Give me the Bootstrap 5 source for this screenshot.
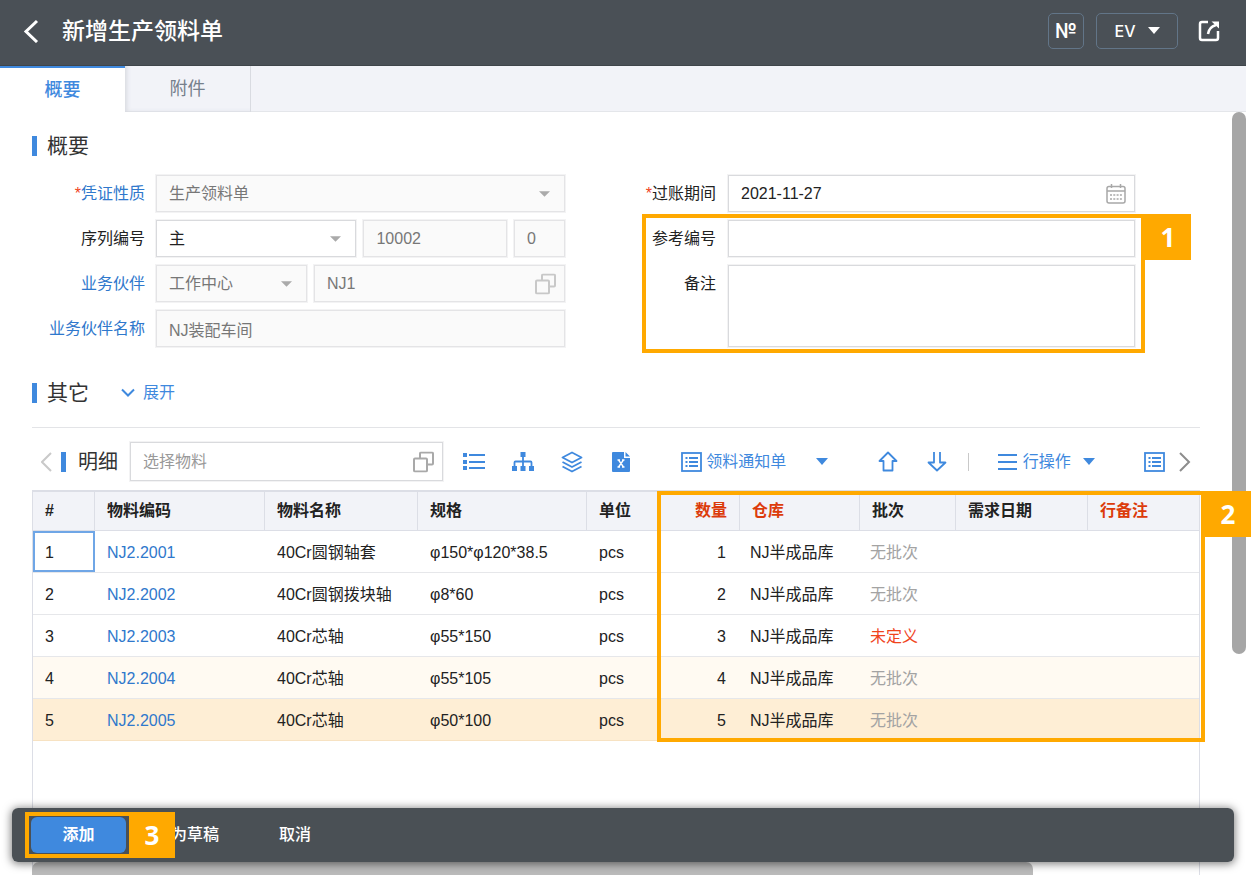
<!DOCTYPE html>
<html lang="zh-CN">
<head>
<meta charset="utf-8">
<meta name="viewport" content="width=device-width, initial-scale=1">
<title>新增生产领料单</title>
<link rel="stylesheet" href="https://cdn.jsdelivr.net/npm/bootstrap@5.3.0/dist/css/bootstrap.min.css">
<style>
:root{--blue:#3f89de;--link:#2f78cc;--bar:#4a5056;--line:#d9dadd;--grid:#dcdee6;--mark:#ffa900;--soft:#fafafa}
body{font-family:"Liberation Sans","Noto Sans CJK SC",sans-serif;font-size:16px;line-height:24px;color:#222;background:#fff}
.app{padding-right:5px}
svg{display:block;flex:none}
.icon-btn{background:none;border:0;padding:0;color:var(--blue)}
/* header */
.topbar{height:66px;padding:0 26px 4px 22px;background:var(--bar);border-bottom:1px solid #3f454a;color:#fff}
.topbar h1{font-size:23px;line-height:30px;font-weight:500;margin:0 0 0 22px}
.topbar .icon-btn{color:#fff}
.box-btn{height:36px;border:1px solid #627588;border-radius:5px;background:none;color:#fff;font-weight:700;padding:0}
.box-no{width:36px;margin-right:12px;font-family:Inter,sans-serif;font-weight:600;font-size:20px;line-height:28px}
.box-ev{width:82px;margin-right:20px;font-family:Inter,sans-serif;font-weight:500}
/* tabs */
.tabstrip{height:46px;background:#f2f3f8;border-bottom:1px solid #e4e6ea}
.tabstrip a{width:126px;height:46px;line-height:46px;font-size:18px;text-align:center;text-decoration:none;color:#76808c;border-right:1px solid #d9dbe1;box-shadow:inset 4px -2px 4px -2px #d9dbe1}
.tabstrip a.current{width:125px;color:var(--blue);background:#fff;font-weight:500;line-height:44px;border-top:2px solid var(--blue);border-right:0;box-shadow:none}
/* sections */
.content-col{min-width:0;padding:19px 32px 0}
.sect{font-size:21px;line-height:30px;font-weight:400;margin:0;color:#333;display:flex;align-items:center}
.sect::before{content:"";width:5px;height:20px;background:var(--blue);margin-right:10px}
.tools .sect{font-size:20px}
.tools .sect::before{margin-right:12px}
/* form */
.form-cols{display:grid;grid-template-columns:minmax(0,533fr) minmax(0,489fr);column-gap:81px;padding-right:65px;margin-top:14px}
.stack{display:flex;flex-direction:column;gap:8px}
.frow{display:flex}
.frow>label{width:113px;margin-right:11px;text-align:right;line-height:37px;flex:none;white-space:nowrap}
.right-col .frow>label{width:70px;margin-right:12px}
.req::before{content:"*";color:#f0441c}
.lnk{color:var(--link)}
.fields{display:flex;gap:7px;flex:1;min-width:0}
.form-control,.form-select{height:37px;border:1px solid var(--line);border-radius:0;padding:0 12px;font-size:16px;line-height:35px;color:#222;background-color:#fff;box-shadow:0 0 0 1px #f3f3f4}
.form-select{background-image:url("data:image/svg+xml,%3Csvg xmlns='http://www.w3.org/2000/svg' viewBox='0 0 10 5'%3E%3Cpath fill='%23aaaaaa' d='M0 0h10L5 5z'/%3E%3C/svg%3E");background-size:11px 6px;background-position:right 14px center}
.form-control:disabled,.form-select:disabled{background-color:var(--soft);color:#777;opacity:1;border-color:#e4e4e6}
.form-control::placeholder{color:#999}
textarea.form-control{height:82px;resize:none}
.w-serial{flex:201 1 201px}
.w-number{flex:144 1 144px;min-width:0}
.w-rev{flex:51 1 51px;min-width:0}
.w-type{flex:151 1 151px}
.w-code{flex:251 1 251px}
.with-icon{position:relative}
.with-icon svg{position:absolute;right:9px;top:50%;transform:translateY(-50%)}
/* detail */
.rule{height:1px;background:#e3e4e7;margin-top:19px}
.tools{height:39px;margin-top:14px;padding:0 9px}
.tools .form-control{height:39px}
.picker{flex:0 1 313px;margin-left:12px}
.tool-groups{flex:1;margin-left:20px}
.short-sep{width:1px;height:18px;background:#c9c9c9;margin:0 29px 0 21px}
.grid-area{margin-top:9px;border:solid var(--grid);border-width:0 1px}
.items{width:100%;table-layout:fixed;margin:0;border-collapse:separate;border-spacing:0}
.items th{height:41px;padding:0 12px;background:#f2f3f8;border:solid var(--grid);border-width:2px 1px 1px 0;font-weight:700;color:#222}
.items th:last-child{border-right:0}
.items td{height:42px;padding:2px 12px 0;border-bottom:1px solid #e6e7ea;white-space:nowrap}
.items th.hot{color:#dc3b0b}
.items td.text-end{padding-right:14px}
.items td.lot,.items td.store{padding-left:10px}
.items td.lot{color:#a3a3a3}
.items td.lot.bad{color:#f0441c}
.items a{color:var(--link);text-decoration:none}
.items tr.warm td{background:#fffaf2}
.items tr.picked td{background:#feeed5;border-color:#f7e2c2}
.items td.sel{box-shadow:inset 0 0 0 2px #6fa6e6}
/* scrollbars */
.vtrack{width:14px;flex:none}
.vtrack div{height:71%;background:#a6a6a6;border-radius:7px}
.hthumb{position:absolute;left:32px;bottom:0;width:80%;height:13px;background:#bababa;border-radius:7px 7px 0 0}
/* bottom bar */
.actions{position:absolute;left:12px;right:17px;bottom:13px;height:54px;padding-left:19px;background:rgba(70,76,82,.98);border-radius:6px;box-shadow:0 1px 9px 1px rgba(0,0,0,.5);z-index:3}
.actions .btn{height:36px;padding:0;border:0;border-radius:6px;font-size:16px;line-height:34px;color:#fff;font-weight:500}
.actions .btn-primary{width:95px;background:var(--blue);font-weight:700}
/* numbered call-outs */
.callout-box{position:absolute;border:4px solid var(--mark);pointer-events:none;z-index:2}
.callout-box b{position:absolute;left:100%;top:-4px;width:50px;height:46px;padding-left:4px;background:var(--mark);color:#fff;font:700 26px/46px "Open Sans",sans-serif;text-align:center}
.c1{left:-4px;right:-10px;top:-6px;bottom:-6px}
.c2{left:53.5%;right:-6px;top:1px;bottom:-1px}
.c3{left:-6px;right:-7px;top:-5px;bottom:-5px}
.callout-box.c3 b{width:46px;padding-left:0}
</style>
</head>
<body>
<div class="app vh-100 d-flex flex-column overflow-hidden position-relative">
  <header class="topbar d-flex align-items-center flex-shrink-0">
    <button class="icon-btn" type="button" aria-label="返回"><svg width="18" height="24" viewBox="0 0 18 24" fill="none" stroke="currentColor" stroke-width="3"><path d="M15 2 4 12.500 15 23"/></svg></button>
    <h1>新增生产领料单</h1>
    <div class="ms-auto d-flex align-items-center">
      <button class="box-btn box-no" type="button">№</button>
      <button class="box-btn box-ev d-flex align-items-center justify-content-center gap-2" type="button">EV
        <svg class="ms-1" width="12" height="7" viewBox="0 0 12 7" fill="currentColor"><path d="M0 0h12L6 7z"/></svg></button>
      <button class="icon-btn" type="button" aria-label="新窗口打开"><svg width="22" height="22" viewBox="0 0 22 22" fill="none" stroke="currentColor" stroke-width="2.500"><path d="M10 2H4a2 2 0 0 0-2 2v14a2 2 0 0 0 2 2h14a2 2 0 0 0 2-2v-7M10 14c.5-4.500 3-7.500 8-9"/><path d="M13.500 1.500H21v7z" fill="currentColor" stroke="none"/></svg></button>
    </div>
  </header>
  <nav class="tabstrip d-flex flex-shrink-0">
    <a class="current" href="#" aria-current="page">概要</a>
    <a href="#">附件</a>
  </nav>

  <main class="d-flex flex-grow-1">
    <div class="content-col flex-grow-1 d-flex flex-column">
      <h2 class="sect">概要</h2>
      <form class="form-cols">
        <div class="stack">
          <div class="frow"><label class="lnk req" for="kind">凭证性质</label>
            <div class="fields"><select class="form-select" id="kind" disabled><option>生产领料单</option></select></div></div>
          <div class="frow"><label for="serial">序列编号</label>
            <div class="fields">
              <select class="form-select w-serial" id="serial"><option>主</option></select>
              <input class="form-control w-number" value="10002" aria-label="编号" disabled>
              <input class="form-control w-rev" value="0" aria-label="版本" disabled>
            </div></div>
          <div class="frow"><label class="lnk" for="partner">业务伙伴</label>
            <div class="fields">
              <select class="form-select w-type" id="partner" disabled><option>工作中心</option></select>
              <div class="with-icon w-code"><input class="form-control" value="NJ1" aria-label="业务伙伴编码" disabled>
                <svg width="21" height="21" viewBox="0 0 21 21" fill="none" stroke="#c8c8c8" stroke-width="2"><path d="M7 7V2a1 1 0 0 1 1-1h11a1 1 0 0 1 1 1v10a1 1 0 0 1-1 1h-5"/><rect x="1" y="7" width="13" height="13" rx="1"/></svg></div>
            </div></div>
          <div class="frow"><label class="lnk" for="pname">业务伙伴名称</label>
            <div class="fields"><input class="form-control" id="pname" value="NJ装配车间" disabled></div></div>
        </div>
        <div class="stack right-col">
          <div class="frow"><label class="req d-flex justify-content-end" for="period">过账期间</label>
            <div class="fields"><div class="with-icon flex-grow-1"><input class="form-control" id="period" value="2021-11-27">
              <svg width="20" height="20" viewBox="0 0 20 20" fill="none" stroke="#a8a8a8" stroke-width="1.500"><rect x="1" y="2.500" width="18" height="16.500" rx="2"/><path d="M1 7h18M5.500 0v4M14.500 0v4"/><path d="M4 11h12M4 15h12" stroke-dasharray="2 1.300"/></svg></div></div></div>
          <div class="stack position-relative">
            <div class="frow"><label for="refno">参考编号</label>
              <div class="fields"><input class="form-control" id="refno"></div></div>
            <div class="frow"><label for="memo">备注</label>
              <div class="fields"><textarea class="form-control" id="memo"></textarea></div></div>
            <div class="callout-box c1"><b>1</b></div>
          </div>
        </div>
      </form>

      <div class="d-flex align-items-center" style="margin-top:31px">
        <h2 class="sect">其它</h2>
        <button class="icon-btn d-flex align-items-center gap-2 ms-4" type="button">
          <svg class="ms-2" width="14" height="10" viewBox="0 0 14 10" fill="none" stroke="currentColor" stroke-width="2"><path d="m1 1.500 6 6 6-6"/></svg>展开</button>
      </div>
      <div class="rule flex-shrink-0"></div>

      <div class="tools d-flex align-items-center flex-shrink-0">
        <button class="icon-btn" type="button" aria-label="向左"><svg width="20" height="20" viewBox="0 0 20 20" fill="none" stroke="#c9c9c9" stroke-width="2"><path d="M10 1 1 10l9 9"/></svg></button>
        <h2 class="sect">明细</h2>
        <div class="with-icon picker"><input class="form-control" placeholder="选择物料" aria-label="选择物料">
          <svg width="21" height="21" viewBox="0 0 21 21" fill="none" stroke="#a9a9a9" stroke-width="2"><path d="M7 7V2a1 1 0 0 1 1-1h11a1 1 0 0 1 1 1v10a1 1 0 0 1-1 1h-5"/><rect x="1" y="7" width="13" height="13" rx="1"/></svg></div>
        <div class="tool-groups d-flex align-items-center justify-content-between">
          <div class="d-flex" style="gap:27px">
            <button class="icon-btn" type="button" aria-label="列表"><svg width="22" height="22" viewBox="0 0 22 22" fill="currentColor"><path d="M0 2h4v4H0zM0 9h4v4H0zM0 15h4v4H0zM6 3h16v2H6zM6 10h16v2H6zM6 16h16v2H6z"/></svg></button>
            <button class="icon-btn" type="button" aria-label="结构"><svg width="22" height="22" viewBox="0 0 22 22" fill="currentColor"><path d="M8.500 1h5v5h-5zM0 15h5v5H0zM8.500 15h5v5h-5zM17 15h5v5h-5z"/><path d="M11 6v9M2.500 15v-3.500a1 1 0 0 1 1-1h15a1 1 0 0 1 1 1V15" fill="none" stroke="currentColor" stroke-width="1.800"/></svg></button>
            <button class="icon-btn" type="button" aria-label="层级"><svg width="22" height="22" viewBox="0 0 22 22" fill="none" stroke="currentColor" stroke-width="1.800" stroke-linejoin="round"><path d="M11 1.500 20.500 6.500 11 11.500 1.500 6.500zM1.500 11l9.500 5 9.500-5M1.500 15.500l9.500 5 9.500-5"/></svg></button>
            <button class="icon-btn" type="button" aria-label="导入表格"><svg width="22" height="22" viewBox="0 0 22 22" fill="currentColor"><path d="M3 1h11v6h6v13a1 1 0 0 1-1 1H3a1 1 0 0 1-1-1V2a1 1 0 0 1 1-1zM15.500 1 20 5.500h-4.500z"/><path d="m8.500 9 5 7M13.500 9l-5 7M7.500 9h2.500M12 9h2.500M7.500 16h2.500M12 16h2.500" stroke="#fff" stroke-width="1.300"/></svg></button>
          </div>
          <button class="icon-btn d-flex align-items-center text-nowrap" type="button">
            <svg class="me-1" width="21" height="20" viewBox="0 0 21 20" fill="none" stroke="currentColor" stroke-width="1.800"><rect x="1" y="1" width="19" height="18"/><path d="M8 6h9M8 10h9M8 14h9M4.500 6h2M4.500 10h2M4.500 14h2"/></svg>领料通知单
            <svg style="margin-left:30px" width="12" height="7" viewBox="0 0 12 7" fill="currentColor"><path d="M0 0h12L6 7z"/></svg></button>
          <div class="d-flex align-items-center">
            <button class="icon-btn" type="button" aria-label="上移"><svg width="20" height="21" viewBox="0 0 20 21" fill="none" stroke="currentColor" stroke-width="1.800" stroke-linejoin="round"><path d="m10 1.500 8.500 8.500h-4v9.500h-9V10h-4z"/></svg></button>
            <button class="icon-btn" style="margin-left:29px" type="button" aria-label="下移"><svg width="20" height="21" viewBox="0 0 20 21" fill="none" stroke="currentColor" stroke-width="1.800" stroke-linejoin="round"><path d="M7 1v10.500H1.500L10 19.500l8.500-8H13V1"/></svg></button>
            <span class="short-sep"></span>
            <button class="icon-btn d-flex align-items-center text-nowrap" type="button">
              <svg style="margin-right:6px" width="19" height="18" viewBox="0 0 19 18" fill="none" stroke="currentColor" stroke-width="2"><path d="M0 2h19M0 9h19M0 16h19"/></svg>行操作
              <svg style="margin-left:12px" width="12" height="7" viewBox="0 0 12 7" fill="currentColor"><path d="M0 0h12L6 7z"/></svg></button>
          </div>
          <div class="d-flex align-items-center" style="gap:14px">
            <button class="icon-btn" type="button" aria-label="表单设置"><svg width="21" height="20" viewBox="0 0 21 20" fill="none" stroke="currentColor" stroke-width="1.800"><rect x="1" y="1" width="19" height="18"/><path d="M8 6h9M8 10h9M8 14h9M4.500 6h2M4.500 10h2M4.500 14h2"/></svg></button>
            <button class="icon-btn" type="button" aria-label="向右"><svg width="12" height="20" viewBox="0 0 12 20" fill="none" stroke="#8d8d8d" stroke-width="2"><path d="m1 1 9 9-9 9"/></svg></button>
          </div>
        </div>
      </div>

      <div class="grid-area flex-grow-1">
        <div class="position-relative">
          <table class="items">
            <colgroup><col style="width:62px"><col style="width:170px"><col style="width:153px"><col style="width:169px"><col style="width:74px"><col style="width:79px"><col style="width:120px"><col style="width:96px"><col style="width:132px"><col style="width:111px"></colgroup>
            <thead><tr><th>#</th><th>物料编码</th><th>物料名称</th><th>规格</th><th>单位</th><th class="hot text-end">数量</th><th class="hot">仓库</th><th>批次</th><th>需求日期</th><th class="hot">行备注</th></tr></thead>
            <tbody>
              <tr><td class="sel">1</td><td><a href="#">NJ2.2001</a></td><td>40Cr圆钢轴套</td><td>φ150*φ120*38.5</td><td>pcs</td><td class="text-end">1</td><td class="store">NJ半成品库</td><td class="lot">无批次</td><td></td><td></td></tr>
              <tr><td>2</td><td><a href="#">NJ2.2002</a></td><td>40Cr圆钢拨块轴</td><td>φ8*60</td><td>pcs</td><td class="text-end">2</td><td class="store">NJ半成品库</td><td class="lot">无批次</td><td></td><td></td></tr>
              <tr><td>3</td><td><a href="#">NJ2.2003</a></td><td>40Cr芯轴</td><td>φ55*150</td><td>pcs</td><td class="text-end">3</td><td class="store">NJ半成品库</td><td class="lot bad">未定义</td><td></td><td></td></tr>
              <tr class="warm"><td>4</td><td><a href="#">NJ2.2004</a></td><td>40Cr芯轴</td><td>φ55*105</td><td>pcs</td><td class="text-end">4</td><td class="store">NJ半成品库</td><td class="lot">无批次</td><td></td><td></td></tr>
              <tr class="picked"><td>5</td><td><a href="#">NJ2.2005</a></td><td>40Cr芯轴</td><td>φ50*100</td><td>pcs</td><td class="text-end">5</td><td class="store">NJ半成品库</td><td class="lot">无批次</td><td></td><td></td></tr>
            </tbody>
          </table>
          <div class="callout-box c2"><b>2</b></div>
        </div>
      </div>
    </div>
    <div class="vtrack"><div></div></div>
  </main>

  <div class="hthumb"></div>
  <footer class="actions d-flex align-items-center">
    <div class="position-relative">
      <button class="btn btn-primary" type="button">添加</button>
      <div class="callout-box c3"><b>3</b></div>
    </div>
    <button class="btn" style="margin-left:45px" type="button">为草稿</button>
    <button class="btn" style="margin-left:60px" type="button">取消</button>
  </footer>
</div>
<script src="https://cdn.jsdelivr.net/npm/bootstrap@5.3.0/dist/js/bootstrap.bundle.min.js"></script>
</body>
</html>
